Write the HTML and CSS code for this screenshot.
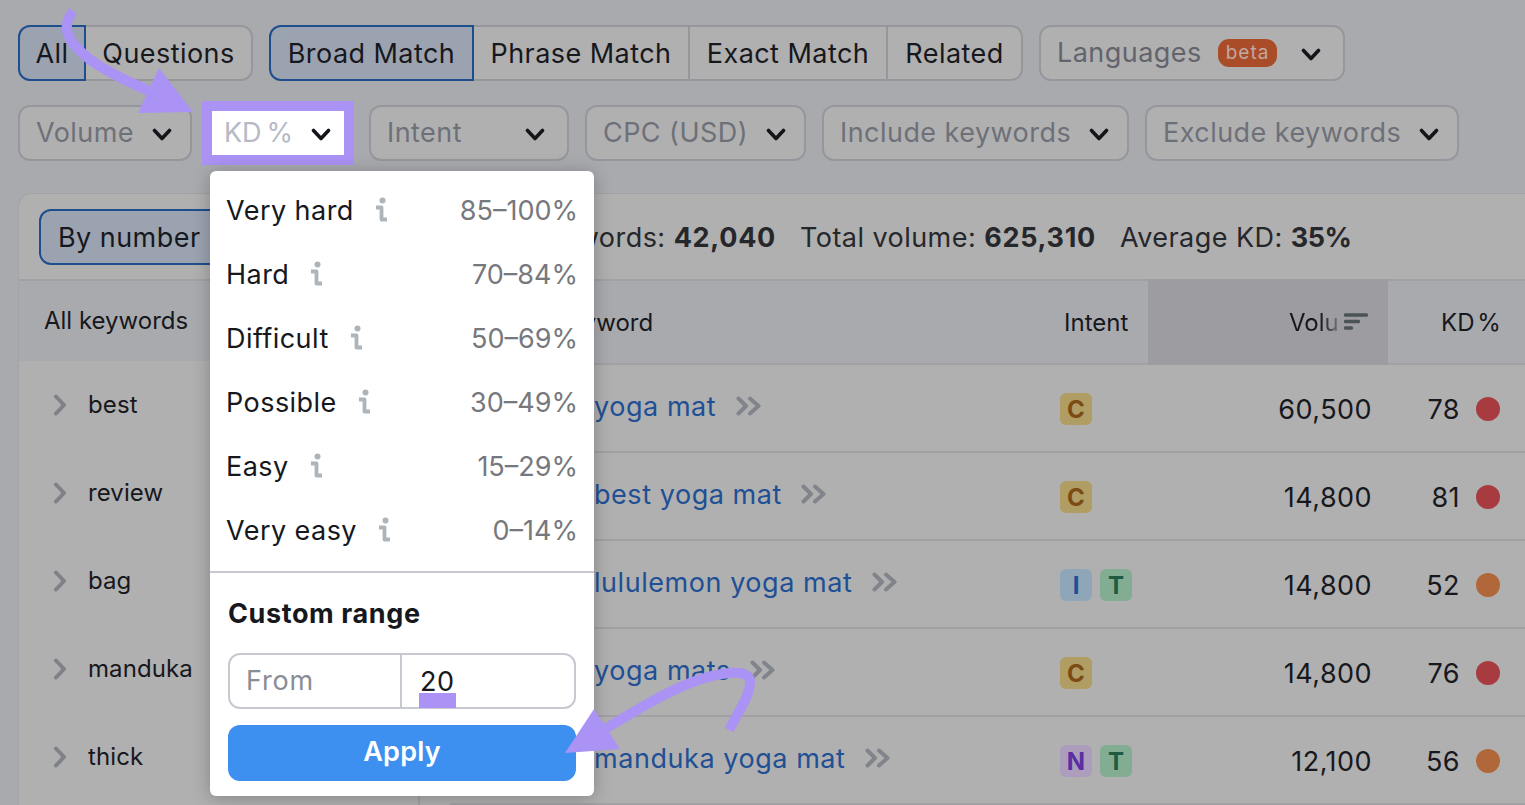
FILE: index.html
```html
<!DOCTYPE html>
<html lang="en">
<head>
<meta charset="utf-8">
<title>Keyword filters</title>
<link rel="stylesheet" href="styles.css">
</head>
<body>
<svg class="defs" width="0" height="0" aria-hidden="true">
  <symbol id="down" viewBox="0 0 20 14"><path d="M2.5 2.5 10 10.5l7.5-8" fill="none" stroke="currentColor" stroke-width="3.6" stroke-linecap="round" stroke-linejoin="round"/></symbol>
  <symbol id="right" viewBox="0 0 14 22"><path d="M3 2.5 11 11l-8 8.5" fill="none" stroke="currentColor" stroke-width="4" stroke-linecap="round" stroke-linejoin="round"/></symbol>
  <symbol id="dbl" viewBox="0 0 26 20"><path d="M2.500 2.500 10 10l-7.500 7.500M14 2.500 22.500 10 14 17.500" fill="none" stroke="currentColor" stroke-width="4" stroke-linecap="round" stroke-linejoin="round"/></symbol>
  <symbol id="info" viewBox="0 0 14 26"><circle cx="8.500" cy="3.500" r="3" fill="currentColor"/><path d="M2 10.500h5.500v12h5.500" fill="none" stroke="currentColor" stroke-width="3.800" stroke-linejoin="round"/></symbol>
</svg>

<div class="page">
  <div class="toolbar">
    <div class="seg">
      <button class="seg-btn active w-all">All</button>
      <button class="seg-btn w-questions">Questions</button>
    </div>
    <div class="seg">
      <button class="seg-btn active w-broad">Broad Match</button>
      <button class="seg-btn w-phrase">Phrase Match</button>
      <button class="seg-btn w-exact">Exact Match</button>
      <button class="seg-btn w-related">Related</button>
    </div>
    <button class="filter w-lang"><span class="lbl">Languages</span> <span class="beta">beta</span><svg class="down"><use href="#down"/></svg></button>
  </div>
  <div class="toolbar second">
    <button class="filter w-volume"><span class="lbl">Volume</span><svg class="down"><use href="#down"/></svg></button>
    <button class="filter kd"><span class="lbl">KD %</span><svg class="down"><use href="#down"/></svg></button>
    <button class="filter w-intent"><span class="lbl">Intent</span><svg class="down"><use href="#down"/></svg></button>
    <button class="filter w-cpc"><span class="lbl">CPC (USD)</span><svg class="down"><use href="#down"/></svg></button>
    <button class="filter w-include"><span class="lbl">Include keywords</span><svg class="down"><use href="#down"/></svg></button>
    <button class="filter w-exclude"><span class="lbl">Exclude keywords</span><svg class="down"><use href="#down"/></svg></button>
  </div>

  <section class="panel">
    <header class="panel-head">
      <button class="by-number">By number</button>
      <div class="stats">
        <span>Keywords: <b>42,040</b></span>
        <span>Total volume: <b>625,310</b></span>
        <span>Average KD: <b class="pct">35%</b></span>
      </div>
    </header>
    <div class="panel-body">
      <aside class="side">
        <div class="side-head">All keywords</div>
        <div class="side-row"><svg class="right"><use href="#right"/></svg>best</div>
        <div class="side-row"><svg class="right"><use href="#right"/></svg>review</div>
        <div class="side-row"><svg class="right"><use href="#right"/></svg>bag</div>
        <div class="side-row"><svg class="right"><use href="#right"/></svg>manduka</div>
        <div class="side-row"><svg class="right"><use href="#right"/></svg>thick</div>
      </aside>
      <div class="table">
        <div class="thead">
          <div class="th th-key">Keyword</div>
          <div class="th">Intent</div>
          <div class="th th-vol"><span class="clip">Volume</span><svg class="sort" viewBox="0 0 24 18"><path d="M1.500 2h21M1.500 8.500h13M1.500 15h6" fill="none" stroke="currentColor" stroke-width="3.400" stroke-linecap="round"/></svg></div>
          <div class="th th-kd">KD %</div>
        </div>
        <div class="tr">
          <div class="td-key"><a>yoga mat</a><svg class="dbl"><use href="#dbl"/></svg></div>
          <div class="td-intent"><span class="badge c">C</span></div>
          <div class="td-vol">60,500</div>
          <div class="td-kd">78<i class="dot red"></i></div>
        </div>
        <div class="tr">
          <div class="td-key"><a>best yoga mat</a><svg class="dbl"><use href="#dbl"/></svg></div>
          <div class="td-intent"><span class="badge c">C</span></div>
          <div class="td-vol">14,800</div>
          <div class="td-kd">81<i class="dot red"></i></div>
        </div>
        <div class="tr">
          <div class="td-key"><a>lululemon yoga mat</a><svg class="dbl"><use href="#dbl"/></svg></div>
          <div class="td-intent"><span class="badge i">I</span><span class="badge t">T</span></div>
          <div class="td-vol">14,800</div>
          <div class="td-kd">52<i class="dot orange"></i></div>
        </div>
        <div class="tr">
          <div class="td-key"><a>yoga mats</a><svg class="dbl"><use href="#dbl"/></svg></div>
          <div class="td-intent"><span class="badge c">C</span></div>
          <div class="td-vol">14,800</div>
          <div class="td-kd">76<i class="dot red"></i></div>
        </div>
        <div class="tr">
          <div class="td-key"><a>manduka yoga mat</a><svg class="dbl"><use href="#dbl"/></svg></div>
          <div class="td-intent"><span class="badge n">N</span><span class="badge t">T</span></div>
          <div class="td-vol">12,100</div>
          <div class="td-kd">56<i class="dot orange"></i></div>
        </div>
      </div>
    </div>
  </section>
</div>

<div class="popup">
  <ul class="levels">
    <li><span>Very hard</span><svg class="info"><use href="#info"/></svg><em>85–100%</em></li>
    <li><span>Hard</span><svg class="info"><use href="#info"/></svg><em>70–84%</em></li>
    <li><span>Difficult</span><svg class="info"><use href="#info"/></svg><em>50–69%</em></li>
    <li><span>Possible</span><svg class="info"><use href="#info"/></svg><em>30–49%</em></li>
    <li><span>Easy</span><svg class="info"><use href="#info"/></svg><em>15–29%</em></li>
    <li><span>Very easy</span><svg class="info"><use href="#info"/></svg><em>0–14%</em></li>
  </ul>
  <div class="custom">
    <h3>Custom range</h3>
    <div class="range">
      <div class="from">From</div>
      <div class="to"><span>20</span><i class="mark"></i></div>
    </div>
    <button class="apply">Apply</button>
  </div>
</div>

<svg class="arrows" viewBox="0 0 1525 805" aria-hidden="true">
  <path class="shaft" d="M73 11C60 28 68 42 88 58C106 72 128 82 152 92"/>
  <path class="head" d="M159 68 193 112 138 113Z"/>
  <path class="shaft" d="M729 730C738 712 750 696 750 682C750 668 722 671 690 683C660 695 630 714 600 732"/>
  <path class="head" d="M594 709 565 753 620 749Z"/>
</svg>
</body>
</html>
```
FILE: styles.css
```css
* { box-sizing: border-box; }
html, body { margin: 0; height: 100%; }
body {
  position: relative;
  width: 1525px;
  height: 805px;
  overflow: hidden;
  background: #a9aaae;
  color: #17181d;
  font-family: Inter, "Noto Sans", sans-serif;
  font-size: 27px;
  letter-spacing: 0.45px;
}
.defs { position: absolute; }
button { font: inherit; color: inherit; margin: 0; letter-spacing: inherit; }
.page { padding: 25px 0 0 18px; width: 1600px; }

.toolbar { display: flex; gap: 16px; height: 56px; }
.second { margin-top: 24px; align-items: center; }

.seg { display: flex; height: 56px; }
.seg-btn {
  height: 56px;
  padding: 0;
  background: #b0b0b0;
  border: 2px solid #96979c;
  border-left-width: 0;
}
.seg-btn:first-child { border-left-width: 2px; border-radius: 12px 0 0 12px; }
.seg-btn:last-child { border-radius: 0 12px 12px 0; }
.seg-btn.active { background: #9ca3b0; border: 2px solid #1f4e8f; }
.w-all { width: 68px; }
.w-questions { width: 167px; }
.w-broad { width: 205px; }
.w-phrase { width: 216px; }
.w-exact { width: 198px; }
.w-related { width: 135px; }

.filter {
  display: flex;
  align-items: center;
  justify-content: space-between;
  height: 56px;
  padding: 0 18px 0 16px;
  background: #b0b0b0;
  border: 2px solid #96979c;
  border-radius: 12px;
  color: #6e7079;
}
.lbl { margin-top: -2px; }
.down { width: 20px; height: 14px; margin-top: 4px; color: #14151a; flex: none; }
.w-lang { width: 306px; color: #62646d; }
.beta {
  margin: 0 0 0 16px;
  padding: 0 8px;
  height: 28px;
  line-height: 28px;
  border-radius: 11px;
  background: #ab4c29;
  color: #bfa9a2;
  font-size: 19px;
  letter-spacing: 1px;
}
.w-lang .down { margin-left: auto; margin-right: 4px; }
.w-volume { width: 174px; }
.w-intent { width: 200px; margin-left: 9px; padding-right: 22px; }
.w-cpc { width: 221px; }
.w-include { width: 307px; }
.w-exclude { width: 314px; }
.kd {
  width: 132px;
  height: 44px;
  margin-left: 4px;
  padding: 0 13px 0 12px;
  background: #fff;
  border: 0;
  border-radius: 0;
  outline: 10px solid #ab92f5;
  color: #b6bac6;
  letter-spacing: -0.2px;
  word-spacing: -2px;
}

.panel {
  margin-top: 32px;
  background: #b0b0b0;
  border: 1px solid #a2a3a6;
  border-right: 0;
  border-bottom: 0;
  border-radius: 14px 0 0 0;
}
.panel-head {
  display: flex;
  align-items: center;
  height: 85px;
  padding-left: 20px;
}
.by-number {
  width: 300px;
  height: 56px;
  padding: 2px 0 0 17px;
  text-align: left;
  background: #9ca3b0;
  border: 2px solid #1f4e8f;
  border-radius: 12px 0 0 12px;
}
.stats {
  display: flex;
  gap: 24px;
  margin-left: 189px;
  padding-top: 2px;
  color: #26272b;
  white-space: nowrap;
}
.stats b { font-weight: 700; letter-spacing: 0.7px; }
.stats b.pct { letter-spacing: -0.5px; }

.panel-body { display: flex; border-top: 2px solid #a0a0a5; }
.side { width: 401px; border-right: 2px solid #a0a0a5; flex: none; }
.side-head {
  height: 80px;
  display: flex;
  align-items: center;
  padding: 0 0 2px 25px;
  background: #a9aaae;
  font-size: 24px;
  letter-spacing: 0;
}
.side-row {
  display: flex;
  align-items: center;
  height: 88px;
  padding: 0 0 2px 34px;
  font-size: 24px;
  letter-spacing: 0.1px;
}
.right { width: 14px; height: 22px; margin: 2px 21px 0 0; color: #7f8189; flex: none; }

.table { flex: 1; padding-left: 30px; }
.thead, .tr {
  display: grid;
  grid-template-columns: 594px 104px 240px 212px;
  width: 1150px;
}
.thead {
  height: 84px;
  align-items: center;
  background: #a9aaae;
  border-bottom: 2px solid #a0a0a5;
  font-size: 24px;
  letter-spacing: 0;
  margin-left: -30px;
  padding-left: 30px;
  width: 1180px;
}
.th { height: 82px; display: flex; align-items: center; padding: 1px 0 0 20px; }
.th-key { padding-left: 104px; }
.th-vol {
  justify-content: flex-end;
  padding: 0 20px 0 0;
  background: #9c9ca1;
  height: 86px;
  margin-top: -2px;
  margin-bottom: -2px;
}
.clip {
  width: 48px;
  overflow: hidden;
  margin-right: 7px;
  white-space: nowrap;
  -webkit-mask-image: linear-gradient(to right, #000 65%, rgba(0,0,0,.35));
  mask-image: linear-gradient(to right, #000 65%, rgba(0,0,0,.35));
}
.sort { width: 24px; height: 18px; color: #4c5358; }
.th-kd { padding-left: 53px; word-spacing: -4px; }

.tr { height: 88px; align-items: center; border-bottom: 2px solid #a0a0a5; }
.td-key { display: flex; align-items: center; padding: 0 0 4px 144px; color: #1f4f94; letter-spacing: 0.55px; }
.dbl { width: 26px; height: 20px; margin-left: 19.500px; color: #82848c; }
.td-intent { display: flex; gap: 8px; padding: 2px 0 0 16px; }
.badge {
  width: 32px;
  height: 32px;
  display: flex;
  align-items: center;
  justify-content: center;
  border-radius: 6px;
  font-size: 24px;
  font-weight: 700;
  letter-spacing: 0;
}
.badge.c { background: #b09d63; color: #7d4a14; }
.badge.i { background: #8fa6b8; color: #1f4f94; }
.badge.t { background: #82ad93; color: #1f5a42; }
.badge.n { background: #ab9dbb; color: #5b2ea3; }
.td-vol { text-align: right; padding: 2px 16px 0 0; }
.td-kd { display: flex; align-items: center; justify-content: flex-end; width: 112px; padding-top: 2px; }
.dot { width: 24px; height: 24px; border-radius: 50%; margin-left: 16px; }
.dot.red { background: #a73b3f; }
.dot.orange { background: #b0683a; }

.popup {
  position: absolute;
  left: 210px;
  top: 171px;
  width: 384px;
  height: 625px;
  background: #fff;
  border-radius: 6px;
  box-shadow: 0 2px 18px rgba(0, 0, 0, 0.25);
}
.levels { list-style: none; margin: 0; padding: 7px 16px 0; height: 402px; border-bottom: 2px solid #c6c9d0; }
.levels li { display: flex; align-items: center; height: 64px; }
.levels svg.info { width: 14px; height: 26px; margin-left: 20px; color: #adb5bb; }
.levels em { margin-left: auto; font-style: normal; color: #77787e; letter-spacing: 0; }
.custom { padding: 23px 18px 0; }
.custom h3 { margin: 0; font-size: 27px; line-height: 36px; font-weight: 700; letter-spacing: 0.6px; }
.range {
  display: flex;
  height: 56px;
  margin-top: 21px;
  border: 2px solid #c6c9d0;
  border-radius: 12px;
}
.from { width: 172px; padding-left: 16px; line-height: 52px; color: #8a8c96; border-right: 2px solid #c6c9d0; letter-spacing: 0.8px; }
.to { position: relative; padding-left: 18px; line-height: 54px; }
.mark { position: absolute; left: 17px; top: 38px; width: 37px; height: 15px; background: #ab92f5; }
.apply {
  display: block;
  width: 348px;
  height: 56px;
  margin-top: 16px;
  padding: 0 0 3px;
  border: 0;
  border-radius: 12px;
  background: #3d8ff0;
  color: #fff;
  font-weight: 600;
  letter-spacing: 0.2px;
}

.arrows { position: absolute; left: 0; top: 0; width: 1525px; height: 805px; pointer-events: none; }
.shaft { fill: none; stroke: #ab92f5; stroke-width: 10; }
.head { fill: #ab92f5; }
```
